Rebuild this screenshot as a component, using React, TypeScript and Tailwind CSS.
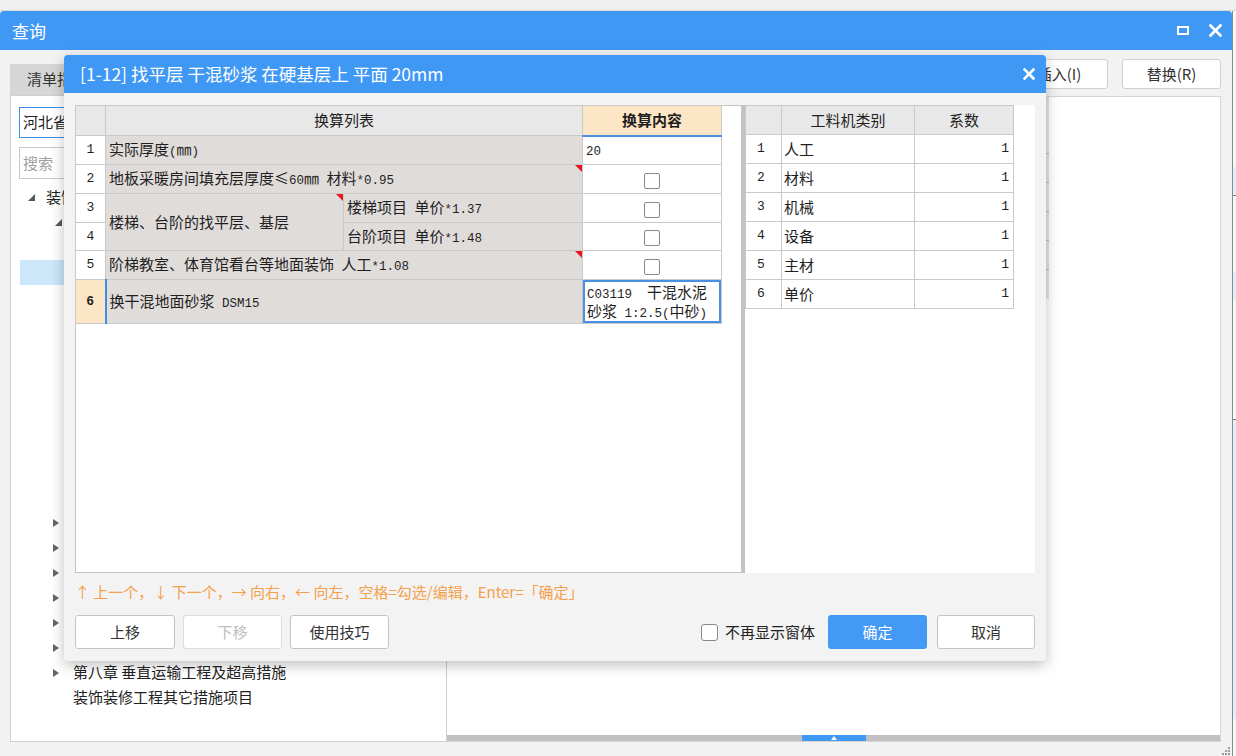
import React from 'react'

const cell = 'border border-[#c9c9c9]'
const gray = 'bg-[#e0dcda]'

function Mix({ text }: { text: string }) {
  const parts = text.split(/([\x20-\x7e]+)/).filter(Boolean)
  return (
    <>
      {parts.map((p, i) =>
        /^[\x20-\x7e]+$/.test(p) ? (
          <span key={i} className="whitespace-pre font-['Liberation_Mono',monospace] text-[12.5px]">
            {p}
          </span>
        ) : (
          <span key={i}>{p}</span>
        )
      )}
    </>
  )
}

function Flag() {
  return (
    <span className="absolute right-0 top-0 h-0 w-0 border-l-[7px] border-t-[7px] border-l-transparent border-t-[#e8151b]" />
  )
}

function Box() {
  return <span className="inline-block h-[16px] w-[16px] rounded-[2px] border border-[#8a8a8a] bg-white align-middle" />
}

function CloseX({ size = 12 }: { size?: number }) {
  return (
    <svg width={size} height={size} viewBox="0 0 12 12">
      <path d="M1.5 1.5 L10.5 10.5 M10.5 1.5 L1.5 10.5" stroke="white" strokeWidth="2.6" strokeLinecap="square" />
    </svg>
  )
}

function ArrowDown() {
  return (
    <svg width="7" height="7" viewBox="0 0 7 7" className="shrink-0">
      <polygon points="7,0 7,7 0,7" fill="#575757" />
    </svg>
  )
}

function ArrowRight() {
  return (
    <svg width="6" height="8" viewBox="0 0 6 8" className="shrink-0">
      <polygon points="0,0 6,4 0,8" fill="#666" />
    </svg>
  )
}

const chapters = [
  '第二章 墙、柱面装饰与隔断、幕墙工程',
  '第三章 天棚工程',
  '第四章 门窗工程',
  '第五章 油漆、涂料、裱糊工程',
  '第六章 其他装饰工程',
  '第七章 脚手架工程',
  '第八章 垂直运输工程及超高措施',
]

const sections = [
  '找平层及整体面层',
  '找平层',
  '整体面层',
  '块料面层',
  '橡塑面层',
  '其他材料面层',
  '踢脚线',
  '楼梯面层',
  '台阶装饰',
  '零星装饰项目',
  '分格嵌条、防滑条',
]

function LeftTable() {
  return (
    <table className="-ml-px -mt-px table-fixed border-collapse text-[15px] text-[#1f1f1f]">
      <colgroup>
        <col className="w-[30px]" />
        <col className="w-[238px]" />
        <col className="w-[239px]" />
        <col className="w-[139px]" />
      </colgroup>
      <thead>
        <tr className="h-[30px]">
          <th className={`${cell} bg-[#e8e8e8]`} />
          <th colSpan={2} className={`${cell} bg-[#e8e8e8] text-center font-normal`}>
            换算列表
          </th>
          <th className={`${cell} border-b-2 border-b-[#4a90e2] bg-[#fde6c6] text-center font-bold`}>换算内容</th>
        </tr>
      </thead>
      <tbody>
        <tr className="h-[29px]">
          <td className={`${cell} bg-white text-center text-[13px] font-['Liberation_Mono',monospace]`}>1</td>
          <td colSpan={2} className={`${cell} ${gray} px-[3px]`}>
            <Mix text="实际厚度(㎜)" />
          </td>
          <td className={`${cell} bg-white px-[3px]`}>
            <Mix text="20" />
          </td>
        </tr>
        <tr className="h-[29px]">
          <td className={`${cell} bg-white text-center text-[13px] font-['Liberation_Mono',monospace]`}>2</td>
          <td colSpan={2} className={`${cell} ${gray} relative px-[3px]`}>
            <Mix text="地板采暖房间填充层厚度≤60㎜ 材料*0.95" />
            <Flag />
          </td>
          <td className={`${cell} bg-white text-center`}>
            <Box />
          </td>
        </tr>
        <tr className="h-[29px]">
          <td className={`${cell} bg-white text-center text-[13px] font-['Liberation_Mono',monospace]`}>3</td>
          <td rowSpan={2} className={`${cell} ${gray} relative px-[3px]`}>
            <Mix text="楼梯、台阶的找平层、基层" />
            <Flag />
          </td>
          <td className={`${cell} ${gray} px-[3px]`}>
            <Mix text="楼梯项目 单价*1.37" />
          </td>
          <td className={`${cell} bg-white text-center`}>
            <Box />
          </td>
        </tr>
        <tr className="h-[28px]">
          <td className={`${cell} bg-white text-center text-[13px] font-['Liberation_Mono',monospace]`}>4</td>
          <td className={`${cell} ${gray} px-[3px]`}>
            <Mix text="台阶项目 单价*1.48" />
          </td>
          <td className={`${cell} bg-white text-center`}>
            <Box />
          </td>
        </tr>
        <tr className="h-[29px]">
          <td className={`${cell} bg-white text-center text-[13px] font-['Liberation_Mono',monospace]`}>5</td>
          <td colSpan={2} className={`${cell} ${gray} relative px-[3px]`}>
            <Mix text="阶梯教室、体育馆看台等地面装饰 人工*1.08" />
            <Flag />
          </td>
          <td className={`${cell} bg-white text-center`}>
            <Box />
          </td>
        </tr>
        <tr className="h-[44px]">
          <td className={`${cell} bg-[#fde6c6] text-center text-[13px] font-bold font-['Liberation_Mono',monospace]`}>6</td>
          <td colSpan={2} className={`${cell} ${gray} border-l-2 border-l-[#3c8ee6] px-[3px]`}>
            <Mix text="换干混地面砂浆 DSM15" />
          </td>
          <td className={`${cell} relative bg-white p-0`}>
            <div className="absolute inset-0 border-2 border-[#4a90e2] px-[2px] pt-[2px] leading-[16px]">
              <Mix text="C03119  干混水泥" />
              <br />
              <Mix text="砂浆 1:2.5(中砂)" />
            </div>
          </td>
        </tr>
      </tbody>
    </table>
  )
}

const factors = ['人工', '材料', '机械', '设备', '主材', '单价']

function RightTable() {
  return (
    <table className="table-fixed border-collapse text-[15px] text-[#1f1f1f]">
      <colgroup>
        <col className="w-[36px]" />
        <col className="w-[133px]" />
        <col className="w-[99px]" />
      </colgroup>
      <thead>
        <tr className="h-[29px]">
          <th className={`${cell} bg-[#e8e8e8]`} />
          <th className={`${cell} bg-[#e8e8e8] text-center font-normal`}>工料机类别</th>
          <th className={`${cell} bg-[#e8e8e8] text-center font-normal`}>系数</th>
        </tr>
      </thead>
      <tbody>
        {factors.map((f, i) => (
          <tr key={f} className="h-[29px]">
            <td className={`${cell} bg-white pl-[11px] text-[13px] font-['Liberation_Mono',monospace]`}>{i + 1}</td>
            <td className={`${cell} bg-white pl-[2px]`}>{f}</td>
            <td className={`${cell} bg-white pr-[4px] text-right text-[13px] font-['Liberation_Mono',monospace]`}>1</td>
          </tr>
        ))}
      </tbody>
    </table>
  )
}

function Dialog() {
  return (
    <div className="absolute left-[64px] top-[55px] flex h-[606px] w-[982px] flex-col overflow-hidden rounded-[4px] bg-[#f3f3f3] shadow-[0_4px_14px_rgba(0,0,0,0.25)]">
      <div className="flex h-[38px] shrink-0 items-center bg-[#4098f5] pl-[16px] pr-[11px] text-[17.5px] text-white">
        <span className="flex-1">[1-12] 找平层 干混砂浆 在硬基层上 平面 20mm</span>
        <CloseX />
      </div>
      <div className="flex flex-1 flex-col px-[11px] pb-[12px] pt-[12px]">
        <div className="flex h-[468px]">
          <div className="w-[667px] border border-[#c6c6c6] bg-white">
            <LeftTable />
          </div>
          <div className="w-[293px] border-l-[3px] border-[#c2c2c2] bg-white">
            <RightTable />
          </div>
        </div>
        <div className="mt-[10px] h-[17px] text-[15px] leading-[17px] text-[#f5a04a]">
          ↑ 上一个，↓ 下一个，→ 向右，← 向左，空格=勾选/编辑，Enter=「确定」
        </div>
        <div className="mt-[15px] flex h-[34px] items-stretch text-[15px]">
          <div className="flex gap-2">
            <button className="w-[100px] rounded-[3px] border border-[#c4c4c4] bg-white text-[#333]">上移</button>
            <button className="w-[99px] rounded-[3px] border border-[#dcdcdc] bg-white text-[#bdbdbd]">下移</button>
            <button className="w-[99px] rounded-[3px] border border-[#c4c4c4] bg-white text-[#333]">使用技巧</button>
          </div>
          <div className="flex-1" />
          <div className="flex items-center">
            <span className="inline-block h-[17px] w-[17px] rounded-[3px] border border-[#8a8a8a] bg-white" />
            <span className="ml-[7px] text-[#222]">不再显示窗体</span>
          </div>
          <button className="ml-[13px] w-[99px] rounded-[3px] bg-[#4499f5] text-white">确定</button>
          <button className="ml-[10px] w-[98px] rounded-[3px] border border-[#c4c4c4] bg-white text-[#333]">取消</button>
        </div>
      </div>
    </div>
  )
}

export default function App() {
  return (
    <div className="relative h-[756px] w-[1236px] overflow-hidden bg-[#ececec] font-['Noto_Sans_CJK_SC',sans-serif] text-[#333]">
      <div className="h-[11px] border-b border-[#d9d9d9] bg-[#efefef]" />
      <div className="flex h-[745px]">
        <div className="flex w-[1232px] flex-col overflow-hidden rounded-t-[4px] bg-[#f2f2f2]">
          {/* window title */}
          <div className="flex h-[39px] shrink-0 items-center bg-[#4098f5] pl-[12px] pr-[10px] text-[17px] text-white">
            <span className="flex-1">查询</span>
            <span className="block h-[9px] w-[12px] border-2 border-white" />
            <span className="ml-[20px]">
              <CloseX size={13} />
            </span>
          </div>

          {/* window body */}
          <div className="relative flex flex-1 pb-[14px] pl-[10px] pr-[11px]">
            {/* left column */}
            <div className="flex w-[437px] flex-col">
              <div className="mt-[14px] flex h-[31px]">
                <div className="flex w-[96px] items-center rounded-t-[2px] bg-[#d6d6d6] pl-[17px] text-[15px] text-[#333]">
                  清单指引
                </div>
                <div className="flex w-[96px] items-center pl-[17px] text-[15px] text-[#333]">定额指引</div>
              </div>
              <div className="flex flex-1 flex-col overflow-hidden border border-[#d0d0d0] bg-white">
                <div className="ml-[8px] mt-[11px] flex h-[31px] items-center border border-[#3c8ee6] pl-[3px] text-[15px] text-[#222]">
                  河北省装饰装修工程消耗量定额(2012)
                </div>
                <div className="ml-[8px] mt-[9px] flex h-[32px] items-center border border-[#c8c8c8] pl-[3px] text-[15px] text-[#a0a0a0]">
                  搜索
                </div>
                <div className="mt-[6px] flex flex-col text-[15px] text-[#222]">
                  <div className="flex h-[25px] items-center pl-[17px]">
                    <ArrowDown />
                    <span className="ml-[11px]">装饰装修工程</span>
                  </div>
                  <div className="flex h-[25px] items-center pl-[44px]">
                    <ArrowDown />
                    <span className="ml-[11px]">第一章 楼地面装饰工程</span>
                  </div>
                  {sections.map((s, i) => (
                    <div
                      key={s}
                      className={
                        i === 1
                          ? 'ml-[9px] flex h-[25px] items-center bg-[#cce6fa] pl-[71px]'
                          : 'flex h-[25px] items-center pl-[80px]'
                      }
                    >
                      {s}
                    </div>
                  ))}
                  {chapters.map((c) => (
                    <div key={c} className="flex h-[25px] items-center pl-[42px]">
                      <ArrowRight />
                      <span className="ml-[14px]">{c}</span>
                    </div>
                  ))}
                  <div className="flex h-[25px] items-center pl-[62px]">装饰装修工程其它措施项目</div>
                </div>
              </div>
            </div>

            {/* right column */}
            <div className="flex flex-1 flex-col">
              <div className="mt-[9px] flex h-[30px] justify-end gap-[14px] text-[15px]">
                <button className="w-[98px] rounded-[3px] border border-[#cfcfcf] bg-white text-[#333]">插入(I)</button>
                <button className="w-[99px] rounded-[3px] border border-[#cfcfcf] bg-white text-[#333]">替换(R)</button>
              </div>
              <div className="mt-[7px] flex flex-1 flex-col border border-l-0 border-[#d5d5d5] bg-white">
                <div className="flex flex-1">
                  <div className="flex flex-1 justify-end">
                    <div className="flex h-[202px] w-[4px] flex-col border-l border-[#cfcfcf] bg-[#e4e4e4]">
                      <div className="h-[57px] border-b border-[#bdbdbd]" />
                      <div className="h-[29px] border-b border-[#bdbdbd]" />
                      <div className="h-[29px] border-b border-[#bdbdbd]" />
                      <div className="h-[29px] border-b border-[#bdbdbd]" />
                      <div className="h-[29px] border-b border-[#bdbdbd]" />
                    </div>
                  </div>
                  <div className="w-[171px]" />
                </div>
                <div className="flex h-[6px] bg-[#c1c1c1]">
                  <div className="ml-[355px] flex w-[64px] items-center justify-center bg-[#4098f5]">
                    <svg width="6" height="4" viewBox="0 0 6 4">
                      <polygon points="3,0 6,4 0,4" fill="white" />
                    </svg>
                  </div>
                </div>
              </div>
            </div>

            {/* resize grip */}
            <svg width="8" height="8" viewBox="0 0 8 8" className="absolute bottom-[1px] right-[2px]">
              <rect x="6" y="0" width="2" height="2" fill="#9a9a9a" />
              <rect x="3" y="3" width="2" height="2" fill="#9a9a9a" />
              <rect x="6" y="3" width="2" height="2" fill="#9a9a9a" />
              <rect x="0" y="6" width="2" height="2" fill="#9a9a9a" />
              <rect x="3" y="6" width="2" height="2" fill="#9a9a9a" />
              <rect x="6" y="6" width="2" height="2" fill="#9a9a9a" />
            </svg>
          </div>
        </div>
        <div className="flex flex-1 flex-col border-l border-[#8a8a8a] bg-[#f7f7f7]">
          <div className="mt-[156px] h-[29px] border-b border-[#7a7a7a] bg-[#e3eefb]" />
          <div className="mt-[76px] h-[29px] bg-[#e3eefb]" />
          <div className="mt-[118px] h-[300px] border-t border-[#7a7a7a] bg-[#e3eefb]" />
        </div>
      </div>
      <Dialog />
    </div>
  )
}
